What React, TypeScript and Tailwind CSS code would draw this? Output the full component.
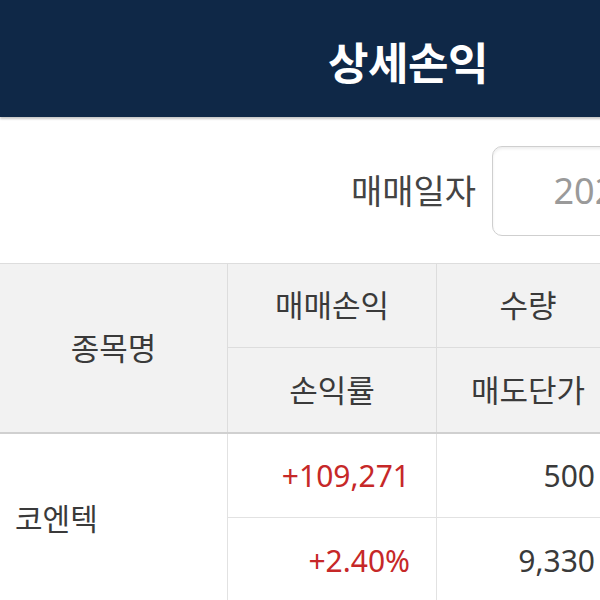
import React from "react";

const rows = [
  { name: "코엔텍", profit: "+109,271", rate: "+2.40%", qty: "500", sell: "9,330", buy: "9,100", amount: "4,550,000" },
];

export default function App() {
  return (
    <div className="w-[600px] h-[600px] overflow-hidden bg-white">
      <div className="w-[816px] font-['Noto_Sans','Noto_Sans_CJK_KR',sans-serif] text-[#333]">
        {/* Title bar */}
        <div className="h-[117px] bg-[#0f2847] flex items-center justify-center pt-[8px] shadow-[0_2px_2px_rgba(0,0,0,0.22)] relative">
          <h1 className="text-white text-[44px] font-bold leading-none tracking-[-0.5px]">상세손익</h1>
        </div>

        {/* Date filter */}
        <div className="flex items-center justify-end pt-[29px] pb-[27px] pr-[17px]">
          <span className="text-[34px] text-[#444] leading-none">매매일자</span>
          <div className="ml-4 w-[307px] h-[90px] rounded-[10px] border border-[#cfcfcf] shadow-[inset_0_2px_3px_rgba(0,0,0,0.07)] flex items-center justify-center">
            <span className="text-[36px] text-[#9a9a9a] leading-none">2024.03.15</span>
          </div>
        </div>

        {/* Table */}
        <div className="border-t border-[#dddddd]">
          <div className="flex bg-[#f2f2f2] border-b-2 border-[#d0d0d0] text-[31px] text-[#3a3a3a]">
            <div className="w-[228px] h-[168px] flex items-center justify-center border-r border-[#dddddd]">
              종목명
            </div>
            <div className="flex flex-col w-[209px] border-r border-[#dddddd]">
              <div className="h-[84px] flex items-center justify-center border-b border-[#dddddd]">매매손익</div>
              <div className="h-[84px] flex items-center justify-center">손익률</div>
            </div>
            <div className="flex flex-col w-[183px] border-r border-[#dddddd]">
              <div className="h-[84px] flex items-center justify-center border-b border-[#dddddd]">수량</div>
              <div className="h-[84px] flex items-center justify-center">매도단가</div>
            </div>
            <div className="flex flex-col w-[196px]">
              <div className="h-[84px] flex items-center justify-center border-b border-[#dddddd]">매도금액</div>
              <div className="h-[84px] flex items-center justify-center">매수단가</div>
            </div>
          </div>

          {rows.map((r) => (
            <div key={r.name} className="flex border-b border-[#e2e2e2] text-[#3a3a3a]">
              <div className="w-[228px] h-[168px] flex items-center pl-[15px] text-[30px] border-r border-[#e2e2e2]">
                {r.name}
              </div>
              <div className="flex flex-col w-[209px] border-r border-[#e2e2e2] text-[30px] text-[#c62828]">
                <div className="h-[84px] flex items-center justify-end pr-[26px] border-b border-[#e2e2e2]">{r.profit}</div>
                <div className="h-[84px] flex items-center justify-end pr-[26px]">{r.rate}</div>
              </div>
              <div className="flex flex-col w-[183px] border-r border-[#e2e2e2] text-[30px]">
                <div className="h-[84px] flex items-center justify-end pr-[24px] border-b border-[#e2e2e2]">{r.qty}</div>
                <div className="h-[84px] flex items-center justify-end pr-[24px]">{r.sell}</div>
              </div>
              <div className="flex flex-col w-[196px] text-[30px]">
                <div className="h-[84px] flex items-center justify-end pr-[24px] border-b border-[#e2e2e2]">{r.amount}</div>
                <div className="h-[84px] flex items-center justify-end pr-[24px]">{r.buy}</div>
              </div>
            </div>
          ))}
        </div>
      </div>
    </div>
  );
}
